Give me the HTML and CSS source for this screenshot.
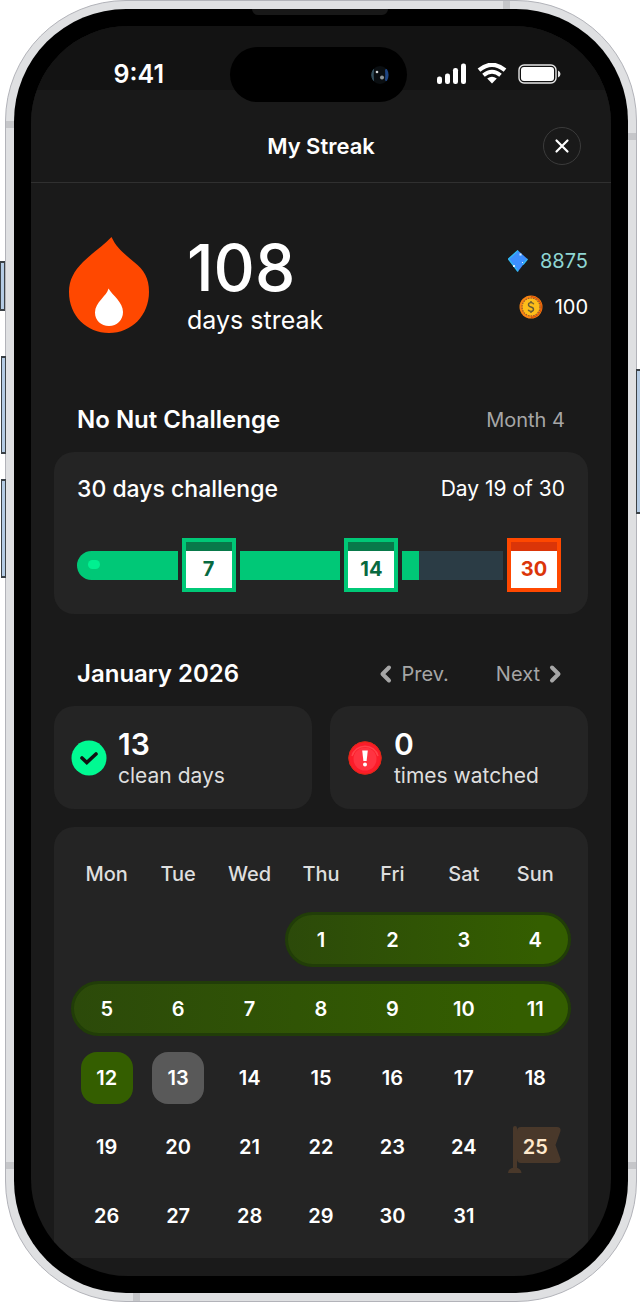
FILE: index.html
```html
<!DOCTYPE html>
<html lang="en">
<head>
<meta charset="utf-8">
<meta name="viewport" content="width=device-width, initial-scale=1">
<title>My Streak</title>
<link rel="stylesheet" href="styles.css">
</head>
<body>
<div class="phone">
  <span class="side-key side-key--action"></span>
  <span class="side-key side-key--up"></span>
  <span class="side-key side-key--down"></span>
  <span class="side-key side-key--power"></span>
  <span class="band band--top"></span>
  <span class="band band--bottom"></span>
  <span class="band band--left-high"></span>
  <span class="band band--right-high"></span>
  <span class="band band--left-low"></span>
  <span class="band band--right-low"></span>
  <div class="bezel">
    <span class="earpiece"></span>
    <div class="screen">
      <div class="status-bar">
        <span class="status-time">9:41</span>
        <span class="island">
          <svg width="24" height="24" viewBox="0 0 24 24" aria-hidden="true">
            <circle cx="12" cy="12" r="9" fill="#0a0e11"/>
            <path d="M5.500 6.500Q2 12 5.500 17.500Q4.800 12 5.500 6.500Z" fill="#35505e" stroke="#35505e"/>
            <path d="M18 6.500Q21 12 18 17.500Q18.500 12 18 6.500Z" fill="#1e4583" stroke="#1e4583" stroke-width="2"/>
            <circle cx="9" cy="9" r="1.300" fill="#d5dadb"/>
            <circle cx="14" cy="14.500" r="2" fill="#8f979b"/>
          </svg>
        </span>
        <span class="status-icons">
          <svg width="29" height="21" viewBox="0 0 29 21" fill="#fff" aria-hidden="true">
            <rect x="0" y="13.500" width="5" height="7.500" rx="2.200"/><rect x="8" y="10.500" width="5" height="10.500" rx="2.200"/><rect x="16" y="5" width="5" height="16" rx="2.200"/><rect x="24" y="0.500" width="5" height="20.500" rx="2.200"/>
          </svg>
          <svg width="30" height="21" viewBox="0 0 30 21" fill="none" stroke="#fff" aria-hidden="true">
            <path d="M2 7.200Q15-3.600 28 7.200" stroke-width="4.200"/>
            <path d="M6.500 12.200Q15 5.200 23.500 12.200" stroke-width="4"/>
            <path d="M10.200 15.600Q15 11.900 19.800 15.600L15 20.500Z" fill="#fff" stroke="none"/>
          </svg>
          <svg width="43" height="20" viewBox="0 0 43 20" aria-hidden="true">
            <rect x="1" y="1" width="37" height="18" rx="5" fill="none" stroke="#e6e6e6" stroke-width="1.400"/>
            <rect x="3" y="3" width="33" height="14" rx="3" fill="#fff"/>
            <path d="M40 6.500Q42.500 7.500 42.500 10T40 13.500Z" fill="#e6e6e6"/>
          </svg>
        </span>
      </div>

      <header class="title-bar">
        <h1 class="title">My Streak</h1>
        <button class="close" type="button" aria-label="Close">
          <svg width="16" height="16" viewBox="0 0 16 16" fill="none" stroke="#fff" stroke-width="2.200" stroke-linecap="round"><path d="M2.500 2.500l11 11M13.500 2.500l-11 11"/></svg>
        </button>
      </header>

      <main class="content">
        <section class="hero">
          <svg class="flame" width="82" height="98" viewBox="0 0 82 98" aria-hidden="true">
            <path d="M43.500 1C35 10 24 17 15 26C6 35 1 44 1 56C1 80 19 97 41 97C64 97 81 79 81 56C81 42 76 34 66 26C57 18 49 13 43.500 1Z" fill="#ff4800"/>
            <path d="M40.500 52.500C39 60 27 66 27 76.500C27 84.500 33 90 41 90C49 90 55 84 55 76C55 66 45 60 40.500 52.500Z" fill="#fff"/>
          </svg>
          <div class="hero-text">
            <span class="hero-count">108</span>
            <span class="hero-label">days streak</span>
          </div>
          <div class="wallet">
            <div class="wallet-row wallet-row--gems">
              <svg width="20" height="22" viewBox="0 0 20 22" aria-hidden="true">
                <path d="M10 .5L19.500 9L10 21.500L.5 9Z" fill="#3d8fff"/>
                <path d="M10 .5L.5 9L10 21.500M15 14.500L19.500 9" fill="none" stroke="#31b9f5" stroke-width="1.400"/>
                <path d="M11.500 3.500h2v2h-2zM5 15h2v2h-2zM14 12h1v1h-1z" fill="#d5f0ff"/>
              </svg>
              <span>8875</span>
            </div>
            <div class="wallet-row">
              <svg width="24" height="24" viewBox="0 0 24 24" fill="none" aria-hidden="true">
                <circle cx="12" cy="12" r="11.500" fill="#f98412"/>
                <path d="M12 1.500a10.500 10.500 0 0 1 0 21" stroke="#d94b05" stroke-width="1"/>
                <circle cx="12" cy="12" r="8.700" fill="#fdbd1a"/>
                <circle cx="12" cy="12" r="9" stroke="#8f5b36" stroke-width="1.200" stroke-dasharray="1.400 1.200"/>
                <path d="M14.800 9.200Q14 7.600 12 7.600Q9.500 7.600 9.500 9.700Q9.500 11.400 12 12T14.500 14.300Q14.500 16.400 12 16.400Q9.800 16.400 9.200 14.800M12 6v2M12 16v2" stroke="#665a37" stroke-width="1.400"/>
              </svg>
              <span>100</span>
            </div>
          </div>
        </section>

        <section class="block">
          <div class="block-head">
            <h2 class="heading">No Nut Challenge</h2>
            <span class="muted">Month 4</span>
          </div>
          <div class="card challenge">
            <div class="challenge-head">
              <h3 class="challenge-name">30 days challenge</h3>
              <span class="challenge-day">Day 19 of 30</span>
            </div>
            <div class="track" role="progressbar" aria-label="30 days challenge" aria-valuemin="0" aria-valuemax="30" aria-valuenow="19">
              <span class="segment segment--first"><i class="fill" style="width:100%"></i></span>
              <span class="milestone">7</span>
              <span class="segment"><i class="fill" style="width:100%"></i></span>
              <span class="milestone">14</span>
              <span class="segment"><i class="fill" style="width:17%"></i></span>
              <span class="milestone milestone--goal">30</span>
            </div>
          </div>
        </section>

        <section class="block block--month">
          <div class="block-head">
            <h2 class="heading">January 2026</h2>
            <nav class="pager">
              <button class="pager-btn" type="button">
                <svg width="13" height="20" viewBox="0 0 13 20" fill="none" stroke="#a6a6a6" stroke-width="4" stroke-linecap="round" stroke-linejoin="round"><path d="M10 3.500L3.500 10L10 16.500"/></svg>
                Prev.
              </button>
              <button class="pager-btn" type="button">
                Next
                <svg width="13" height="20" viewBox="0 0 13 20" fill="none" stroke="#a6a6a6" stroke-width="4" stroke-linecap="round" stroke-linejoin="round"><path d="M3 3.500L9.500 10L3 16.500"/></svg>
              </button>
            </nav>
          </div>

          <div class="stats">
            <div class="card stat">
              <svg width="36" height="36" viewBox="0 0 36 36" aria-hidden="true">
                <circle cx="18" cy="18" r="17.500" fill="#00fa92"/>
                <path d="M11 18L15.800 22.500L25 14" fill="none" stroke="#111" stroke-width="3.600" stroke-linecap="round" stroke-linejoin="miter"/>
              </svg>
              <div class="stat-text"><span class="stat-value">13</span><span class="stat-label">clean days</span></div>
            </div>
            <div class="card stat">
              <svg width="36" height="36" viewBox="0 0 36 36" aria-hidden="true">
                <circle cx="18" cy="18" r="16.500" fill="#fb1c2a"/>
                <circle cx="18" cy="18" r="16.200" fill="none" stroke="#df2a14" stroke-width="1"/>
                <circle cx="18" cy="19" r="11.500" fill="#ff3341"/>
                <path d="M5 16A13.500 13.500 0 0 1 31 16" fill="none" stroke="#ff4149" stroke-width="1.500"/>
                <path d="M15.200 10.500h5.600L19.600 21h-3.200Z" fill="#fff"/>
                <circle cx="18" cy="24.500" r="2" fill="#fff"/>
              </svg>
              <div class="stat-text"><span class="stat-value">0</span><span class="stat-label">times watched</span></div>
            </div>
          </div>

          <table class="card calendar">
            <thead>
              <tr class="week week--names"><th scope="col">Mon</th><th scope="col">Tue</th><th scope="col">Wed</th><th scope="col">Thu</th><th scope="col">Fri</th><th scope="col">Sat</th><th scope="col">Sun</th></tr>
            </thead>
            <tbody>
              <tr class="week week--streak week--from-thu"><td></td><td></td><td></td><td>1</td><td>2</td><td>3</td><td>4</td></tr>
              <tr class="week week--streak"><td>5</td><td>6</td><td>7</td><td>8</td><td>9</td><td>10</td><td>11</td></tr>
              <tr class="week"><td><span class="day day--clean">12</span></td><td><span class="day day--today">13</span></td><td>14</td><td>15</td><td>16</td><td>17</td><td>18</td></tr>
              <tr class="week"><td>19</td><td>20</td><td>21</td><td>22</td><td>23</td><td>24</td>
                <td class="day-goal">
                  <svg class="flag" width="54" height="54" viewBox="0 0 54 54" fill="#49382a" aria-hidden="true">
                    <rect x="5" y="6" width="4" height="44" rx="2"/>
                    <path d="M0 53Q0 48 7 47.500Q13 48 13.500 53Z"/>
                    <path d="M13 7H49Q53 7 52.500 11L47.500 25L52.500 39Q53 43 49 43H13Q9 43 9 39V11Q9 7 13 7Z"/>
                  </svg>
                  <span class="goal-number">25</span>
                </td></tr>
              <tr class="week"><td>26</td><td>27</td><td>28</td><td>29</td><td>30</td><td>31</td><td></td></tr>
            </tbody>
          </table>
        </section>
      </main>
    </div>
  </div>
</div>
</body>
</html>
```
FILE: styles.css
```css
*, *::before, *::after { box-sizing: border-box; }

body {
  margin: 0;
  padding: 0 3px 0 5px;
  background: #fff;
  color: #fff;
  font-family: Inter, "Liberation Sans", sans-serif;
}

h1, h2, h3 { margin: 0; }

button {
  padding: 0;
  border: 0;
  background: none;
  color: inherit;
  font: inherit;
  cursor: pointer;
}

svg { display: block; flex: none; }

/* Device frame */
.phone {
  position: relative;
  padding: 8px;
  border: 1px solid #b2b3b9;
  border-radius: 121px;
  background: #dfe0e2;
}

.bezel {
  position: relative;
  padding: 17px;
  border-radius: 112px;
  background: #000;
}

.screen {
  overflow: hidden;
  border-radius: 97px;
  background: #1a1a1a;
}

.earpiece {
  position: absolute;
  top: 0;
  left: 50%;
  width: 136px;
  height: 6px;
  margin-left: -69px;
  border-radius: 0 0 6px 6px;
  background: #181818;
}

.side-key {
  position: absolute;
  left: -5px;
  width: 5px;
  border: solid #3b4146;
  border-width: 2px 1px;
  background: #b4cbe4;
}

.side-key--action { top: 260px; height: 50px; left: -6px; }
.side-key--up { top: 355px; height: 98px; }
.side-key--down { top: 478px; height: 99px; }
.side-key--power { top: 368px; right: -5px; left: auto; height: 145px; }

.band { position: absolute; background: #c5c6c9; }
.band--top, .band--bottom { width: 7px; height: 8px; }
.band--top { top: 0; right: 126px; }
.band--bottom { bottom: 0; left: 127px; }
.band--left-high, .band--left-low, .band--right-high, .band--right-low { width: 8px; height: 7px; }
.band--left-high { top: 120px; left: 0; }
.band--right-high { top: 132px; right: 0; }
.band--left-low { bottom: 132px; left: 0; }
.band--right-low { bottom: 132px; right: 0; }

/* Status bar */
.status-bar {
  display: grid;
  grid-template-columns: 199px 177px 1fr;
  height: 64px;
  padding-top: 21px;
  background: #131313;
}

.status-time {
  justify-self: end;
  padding-right: 66px;
  font-size: 25px;
  font-weight: 600;
  line-height: 55px;
}

.island {
  display: flex;
  z-index: 1;
  align-items: center;
  justify-content: flex-end;
  height: 55px;
  padding-right: 15px;
  border-radius: 28px;
  background: #000;
}

.status-icons {
  display: flex;
  align-items: center;
  gap: 11px;
  height: 53px;
  padding-left: 30px;
}

/* Title bar */
.title-bar {
  display: grid;
  grid-template-columns: 1fr auto 1fr;
  align-items: center;
  height: 93px;
  padding: 20px 30px 0;
  border-bottom: 1px solid #303030;
  background: #191919;
}

.title {
  grid-column: 2;
  font-size: 22px;
  font-weight: 600;
  line-height: 28px;
}

.close {
  display: grid;
  place-items: center;
  justify-self: end;
  width: 38px;
  height: 38px;
  border: 1px solid #3b3b3b;
  border-radius: 50%;
}

/* Content */
.content { padding: 0 23px 18px; }

.hero {
  display: flex;
  align-items: center;
  padding: 51px 0 68px 14px;
}

.hero-text {
  display: flex;
  flex-direction: column;
  padding-left: 37px;
}

.hero-count {
  font-size: 64px;
  font-weight: 500;
  line-height: 68px;
}

.hero-label {
  padding-top: 2px;
  font-size: 25px;
  line-height: 32px;
}

.wallet {
  display: flex;
  flex-direction: column;
  gap: 18px;
  align-items: flex-end;
  margin-left: auto;
  padding-bottom: 2px;
  font-size: 20px;
  line-height: 28px;
}

.wallet-row {
  display: flex;
  align-items: center;
  gap: 12px;
}

.wallet-row--gems { color: #8fd6d3; }

.block--month { padding-top: 44px; }

.block-head {
  display: flex;
  align-items: center;
  justify-content: space-between;
  height: 32px;
  margin-bottom: 16px;
  padding: 0 23px;
}

.heading {
  font-size: 24px;
  font-weight: 600;
  line-height: 32px;
}

.muted {
  color: #a6a6a6;
  font-size: 20px;
}

.card {
  border-radius: 20px;
  background: #242424;
}

.challenge { padding: 23px 23px 22px; }

.challenge-head {
  display: flex;
  justify-content: space-between;
  margin-bottom: 35px;
  line-height: 28px;
}

.challenge-name {
  font-size: 23px;
  font-weight: 500;
}

.challenge-day { font-size: 21px; }

.track {
  display: flex;
  align-items: center;
  gap: 4px;
  padding-right: 4px;
}

.segment {
  position: relative;
  flex: 1;
  height: 29px;
  overflow: hidden;
  background: #2b3c45;
}

.segment--first { border-radius: 15px 0 0 15px; }

.segment--first::after {
  position: absolute;
  top: 9px;
  left: 11px;
  width: 12px;
  height: 9px;
  border-radius: 5px;
  background: #00f090;
  content: "";
}

.fill {
  display: block;
  height: 100%;
  background: #00c877;
}

.milestone {
  width: 54px;
  height: 54px;
  padding-top: 9px;
  border: 4px solid #00c877;
  background: linear-gradient(#08794a 9px, #fff 9px);
  color: #08693f;
  font-size: 20px;
  font-weight: 700;
  line-height: 36px;
  text-align: center;
}

.milestone--goal {
  border-color: #ff4800;
  background: linear-gradient(#db3508 9px, #fff 9px);
  color: #db3508;
}

.pager {
  display: flex;
  gap: 47px;
  padding-right: 3px;
  color: #a6a6a6;
  font-size: 20px;
}

.pager-btn {
  display: flex;
  align-items: center;
  gap: 9px;
}

.stats {
  display: grid;
  grid-template-columns: 1fr 1fr;
  gap: 18px;
  margin-bottom: 18px;
}

.stat {
  display: flex;
  align-items: center;
  gap: 11px;
  height: 103px;
  padding-left: 17px;
}

.stat-text {
  display: flex;
  flex-direction: column;
}

.stat-value {
  font-size: 30px;
  font-weight: 600;
  line-height: 36px;
}

.stat-label {
  color: #dedede;
  font-size: 21px;
  line-height: 28px;
}

/* Calendar */
.calendar {
  display: block;
  padding: 33px 17px 15px;
  border-radius: 20px 20px 0 0;
  font-size: 20px;
  font-weight: 500;
}

.calendar thead { display: block; margin-bottom: 24px; }
.calendar tbody { display: grid; gap: 14px; }

.week {
  display: grid;
  grid-template-columns: repeat(7, 1fr);
  align-items: center;
  height: 55px;
}

.week--names { height: 28px; color: #dedede; }

.week th, .week td {
  display: grid;
  grid-row: 1;
  place-items: center;
  padding: 0;
  font-weight: 500;
}

.week tbody td, .week td { font-weight: 600; }

.week--streak::before {
  grid-row: 1;
  grid-column: 1 / 8;
  height: 55px;
  border: 3px solid #213d08;
  border-radius: 28px;
  background: linear-gradient(90deg, #2c4a0a, #345e00 90%);
  content: "";
}

.week--from-thu::before { grid-column: 4 / 8; }

.week td:nth-child(1), .week th:nth-child(1) { grid-column: 1; }
.week td:nth-child(2), .week th:nth-child(2) { grid-column: 2; }
.week td:nth-child(3), .week th:nth-child(3) { grid-column: 3; }
.week td:nth-child(4), .week th:nth-child(4) { grid-column: 4; }
.week td:nth-child(5), .week th:nth-child(5) { grid-column: 5; }
.week td:nth-child(6), .week th:nth-child(6) { grid-column: 6; }
.week td:nth-child(7), .week th:nth-child(7) { grid-column: 7; }

.day {
  display: grid;
  place-items: center;
  width: 52px;
  height: 52px;
  border-radius: 16px;
}

.day--clean { background: #345e00; }
.day--today { background: #595959; }

.flag, .goal-number { grid-area: 1 / 1; }
.goal-number { z-index: 1; color: #ffe9cc; }
```
